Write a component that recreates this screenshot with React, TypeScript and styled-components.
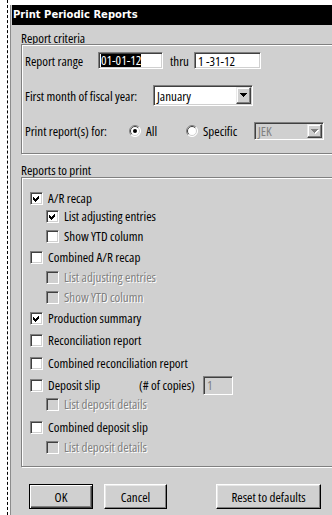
import styled, { createGlobalStyle } from 'styled-components';

interface CheckItem {
  label: string;
  checked?: boolean;
  sub?: boolean;
  disabled?: boolean;
  space: number;
  copies?: boolean;
}

const reports: CheckItem[] = [
  { label: 'A/R recap', checked: true, space: 0 },
  { label: 'List adjusting entries', checked: true, sub: true, space: 4 },
  { label: 'Show YTD column', sub: true, space: 6 },
  { label: 'Combined A/R recap', space: 7 },
  { label: 'List adjusting entries', sub: true, disabled: true, space: 6 },
  { label: 'Show YTD column', sub: true, disabled: true, space: 6 },
  { label: 'Production summary', checked: true, space: 7 },
  { label: 'Reconciliation report', space: 8 },
  { label: 'Combined reconciliation report', space: 9 },
  { label: 'Deposit slip', space: 8, copies: true },
  { label: 'List deposit details', sub: true, disabled: true, space: 5 },
  { label: 'Combined deposit slip', space: 9 },
  { label: 'List deposit details', sub: true, disabled: true, space: 6 },
];

const GlobalStyle = createGlobalStyle`
  html, body {
    margin: 0;
    padding: 0;
    background: #fff;
    overflow: hidden;
  }
  body {
    font-family: "Open Sans", "Liberation Sans", Arial, sans-serif;
    font-stretch: 75%;
    font-weight: 370;
    font-size: 13px;
    color: #000;
  }
`;

const Page = styled.div`
  display: flex;
  height: 515px;
`;

const DashedRule = styled.div`
  margin-left: 7px;
  border-left: 1px dashed #000;
`;

const Dialog = styled.div`
  flex-shrink: 0;
  width: 340px;
  height: 510px;
  margin: 5px 0 0 2px;
  background: #d0d0d0;
  border-left: 1px solid #8c8c8c;
  display: flex;
  flex-direction: column;
`;

const TitleBar = styled.div`
  height: 20px;
  margin-left: 1px;
  padding-left: 1px;
  background: #000;
  color: #fff;
  font: bold 10px "DejaVu Sans", Verdana, sans-serif;
  line-height: 20px;
`;

const Content = styled.div`
  padding-left: 10px;
  display: flex;
  flex-direction: column;
`;

const GroupLabel = styled.div<{ $mt: number; $h: number }>`
  height: ${(p) => p.$h}px;
  line-height: 12px;
  margin-top: ${(p) => p.$mt}px;
`;

const GroupBox = styled.div<{ $pt: number; $pb: number }>`
  border: 1px solid #808080;
  box-shadow: inset 1px 1px 0 #fff, 1px 1px 0 #fff;
  padding: ${(p) => p.$pt}px 0 ${(p) => p.$pb}px 3px;
  display: flex;
  flex-direction: column;
`;

const CriteriaRow = styled.div<{ $mt: number; $h: number }>`
  display: flex;
  align-items: center;
  height: ${(p) => p.$h}px;
  margin-top: ${(p) => p.$mt}px;
`;

const RowLabel = styled.span<{ $w: number }>`
  width: ${(p) => p.$w}px;
  flex-shrink: 0;
  white-space: nowrap;
`;

const Thru = styled.span`
  width: 24px;
  margin-left: 7px;
  flex-shrink: 0;
`;

const Field = styled.div<{ $w: number; $h: number; $disabled?: boolean }>`
  box-sizing: border-box;
  flex-shrink: 0;
  width: ${(p) => p.$w}px;
  height: ${(p) => p.$h}px;
  padding: 1px 1px 1px 3px;
  border: 1px solid;
  border-color: #808080 #fff #fff #808080;
  box-shadow: inset 1px 1px 0 #404040, inset -1px -1px 0 #d0d0d0;
  background: ${(p) => (p.$disabled ? '#d0d0d0' : '#fff')};
  color: ${(p) => (p.$disabled ? '#808080' : '#000')};
  display: flex;
  align-items: center;
  white-space: nowrap;
  overflow: hidden;
`;

const Selected = styled.span`
  margin-left: -1px;
  background: #000;
  color: #fff;
  line-height: 13px;
`;

const DropButton = styled.span`
  box-sizing: border-box;
  margin-left: auto;
  width: 15px;
  height: 100%;
  background: #d0d0d0;
  border: 1px solid;
  border-color: #e8e8e8 #404040 #404040 #e8e8e8;
  box-shadow: inset -1px -1px 0 #808080, inset 1px 1px 0 #fff;
  display: flex;
  align-items: center;
  justify-content: center;
`;

const RadioOption = styled.label<{ $w: number }>`
  width: ${(p) => p.$w}px;
  flex-shrink: 0;
  display: flex;
  align-items: center;
  gap: 5px;
`;

const CheckRow = styled.div<{ $mt: number; $sub?: boolean }>`
  display: flex;
  align-items: center;
  height: 14px;
  margin-top: ${(p) => p.$mt}px;
  padding-left: ${(p) => (p.$sub ? 21 : 5)}px;
  gap: 5px;
`;

const CheckBox = styled.span<{ $disabled?: boolean }>`
  box-sizing: border-box;
  flex-shrink: 0;
  width: 13px;
  height: 13px;
  border: 1px solid;
  border-color: #808080 #fff #fff #808080;
  box-shadow: inset 1px 1px 0 #404040, inset -1px -1px 0 #d0d0d0;
  background: ${(p) => (p.$disabled ? '#d0d0d0' : '#fff')};
  display: flex;
`;

const CheckText = styled.span<{ $disabled?: boolean; $w?: number }>`
  white-space: nowrap;
  ${(p) => (p.$w ? `width: ${p.$w}px; flex-shrink: 0;` : '')}
  color: ${(p) => (p.$disabled ? '#808080' : '#000')};
  text-shadow: ${(p) => (p.$disabled ? '1px 1px 0 #fff' : 'none')};
`;

const Copies = styled.span`
  width: 59px;
  flex-shrink: 0;
  margin-left: -5px;
  white-space: nowrap;
`;

const ButtonRow = styled.div`
  display: flex;
  margin-top: 17px;
  padding-left: 8px;
`;

const Button = styled.button<{ $w: number; $ml?: number; $default?: boolean }>`
  box-sizing: border-box;
  width: ${(p) => p.$w}px;
  height: 25px;
  margin-left: ${(p) => p.$ml ?? 0}px;
  padding: 0;
  font: inherit;
  color: #000;
  background: #d0d0d0;
  border: 1px solid;
  border-color: ${(p) => (p.$default ? '#000' : '#fff #000 #000 #fff')};
  box-shadow: ${(p) =>
    p.$default
      ? 'inset 1px 1px 0 #fff, inset -1px -1px 0 #404040, inset -2px -2px 0 #808080'
      : 'inset -1px -1px 0 #808080, inset 1px 1px 0 #e8e8e8'};
`;

const Arrow = ({ disabled }: { disabled?: boolean }) => (
  <svg width="8" height="5" viewBox="0 0 8 5" shapeRendering="crispEdges">
    {disabled && <polygon points="1,1 8,1 4.5,5" fill="#fff" />}
    <polygon points="0,0 7,0 3.5,4" fill={disabled ? '#808080' : '#000'} />
  </svg>
);

const Radio = ({ checked }: { checked?: boolean }) => (
  <svg width="12" height="12" viewBox="0 0 12 12">
    <circle cx="6" cy="6" r="5.5" fill="#fff" />
    <path d="M2.1 9.9 A5.5 5.5 0 0 1 9.9 2.1" stroke="#808080" fill="none" />
    <path d="M9.9 2.1 A5.5 5.5 0 0 1 2.1 9.9" stroke="#fff" fill="none" />
    <path d="M2.8 9.2 A4.5 4.5 0 0 1 9.2 2.8" stroke="#404040" fill="none" />
    <path d="M9.2 2.8 A4.5 4.5 0 0 1 2.8 9.2" stroke="#d0d0d0" fill="none" />
    {checked && <circle cx="6" cy="6" r="2" fill="#000" />}
  </svg>
);

const Check = ({ item }: { item: CheckItem }) => (
  <CheckRow $mt={item.space} $sub={item.sub}>
    <CheckBox $disabled={item.disabled}>
      {item.checked && (
        <svg width="11" height="11" viewBox="0 0 11 11" shapeRendering="crispEdges">
          <polygon points="2,4 4,6 8,2 8,5 4,9 2,7" fill="#000" />
        </svg>
      )}
    </CheckBox>
    <CheckText $disabled={item.disabled} $w={item.copies ? 91 : undefined}>
      {item.label}
    </CheckText>
    {item.copies && (
      <>
        <Copies>(# of copies)</Copies>
        <Field $w={30} $h={19} $disabled>
          1
        </Field>
      </>
    )}
  </CheckRow>
);

const App = () => {
  return (
    <>
      <GlobalStyle />
      <Page>
        <DashedRule />
        <Dialog>
          <TitleBar>Print Periodic Reports</TitleBar>
          <Content>
            <GroupLabel $mt={7} $h={12}>
              Report criteria
            </GroupLabel>
            <GroupBox $pt={7} $pb={13}>
              <CriteriaRow $mt={0} $h={17}>
                <RowLabel $w={73}>Report range</RowLabel>
                <Field $w={65} $h={17}>
                  <Selected>01-01-12</Selected>
                </Field>
                <Thru>thru</Thru>
                <Field $w={67} $h={17}>
                  1 -31-12
                </Field>
              </CriteriaRow>
              <CriteriaRow $mt={16} $h={21}>
                <RowLabel $w={128}>First month of fiscal year:</RowLabel>
                <Field $w={100} $h={21}>
                  January
                  <DropButton>
                    <Arrow />
                  </DropButton>
                </Field>
              </CriteriaRow>
              <CriteriaRow $mt={16} $h={18}>
                <RowLabel $w={104}>Print report(s) for:</RowLabel>
                <RadioOption $w={57}>
                  <Radio checked />
                  All
                </RadioOption>
                <RadioOption $w={68}>
                  <Radio />
                  Specific
                </RadioOption>
                <Field $w={70} $h={18} $disabled>
                  JEK
                  <DropButton>
                    <Arrow disabled />
                  </DropButton>
                </Field>
              </CriteriaRow>
            </GroupBox>

            <GroupLabel $mt={10} $h={13}>
              Reports to print
            </GroupLabel>
            <GroupBox $pt={13} $pb={12}>
              {reports.map((item, i) => (
                <Check key={i} item={item} />
              ))}
            </GroupBox>

            <ButtonRow>
              <Button $w={64} $default>
                OK
              </Button>
              <Button $w={63} $ml={11}>
                Cancel
              </Button>
              <Button $w={105} $ml={49}>
                Reset to defaults
              </Button>
            </ButtonRow>
          </Content>
        </Dialog>
      </Page>
    </>
  );
};

export default App;
